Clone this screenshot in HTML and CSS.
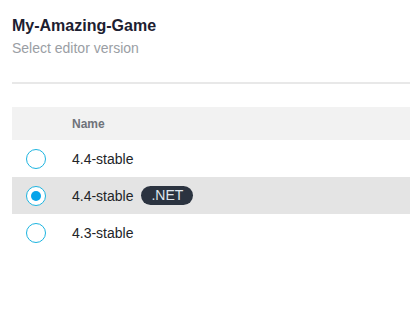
FILE: index.html
```html
<!DOCTYPE html>
<html>
<head>
<meta charset="utf-8">
<link rel="stylesheet" href="styles.css">
</head>
<body>
<div class="page">
  <div class="head">
    <div class="title">My-Amazing-Game</div>
    <div class="subtitle">Select editor version</div>
  </div>
  <div class="divider"></div>
  <div class="table">
    <div class="row header">
      <div class="cell-radio"></div>
      <div class="cell-name">Name</div>
    </div>
    <div class="row">
      <div class="cell-radio"><span class="radio"></span></div>
      <div class="cell-name">4.4-stable</div>
    </div>
    <div class="row selected">
      <div class="cell-radio"><span class="radio checked"></span></div>
      <div class="cell-name">4.4-stable <span class="badge">.NET</span></div>
    </div>
    <div class="row">
      <div class="cell-radio"><span class="radio"></span></div>
      <div class="cell-name">4.3-stable</div>
    </div>
  </div>
</div>
</body>
</html>
```
FILE: styles.css
```css
html, body {
  margin: 0;
  padding: 0;
  background: #ffffff;
}
body {
  font-family: "Liberation Sans", Arial, sans-serif;
}
.page {
  padding: 16px 0 0 12px;
}
.title {
  font-size: 16px;
  font-weight: bold;
  color: #1c2030;
  line-height: 20px;
}
.subtitle {
  margin-top: 3px;
  font-size: 14px;
  color: #9a9ea4;
  line-height: 18px;
}
.divider {
  margin-top: 25px;
  height: 2px;
  background: #e8e8e8;
}
.table {
  margin-top: 23px;
}
.row {
  display: flex;
  align-items: center;
  height: 37px;
  font-size: 14px;
  color: #222428;
}
.row.header {
  height: 33px;
  background: #f2f2f2;
  font-size: 12px;
  font-weight: bold;
  color: #6f737a;
}
.row.selected {
  background: #e4e4e4;
}
.cell-radio {
  width: 60px;
  display: flex;
  justify-content: center;
  box-sizing: border-box;
  padding-right: 12px;
}
.radio {
  width: 20px;
  height: 20px;
  box-sizing: border-box;
  border: 1.5px solid #1cb4e0;
  border-radius: 50%;
  background: #ffffff;
  display: flex;
  align-items: center;
  justify-content: center;
}
.radio.checked::after {
  content: "";
  width: 10px;
  height: 10px;
  border-radius: 50%;
  background: #06a4ea;
}
.cell-name {
  display: flex;
  align-items: center;
  gap: 8px;
}
.badge {
  display: inline-block;
  background: #2b3340;
  color: #dfe6ee;
  font-size: 14px;
  line-height: 19px;
  height: 19px;
  padding: 0 10px;
  border-radius: 10px;
}
```
